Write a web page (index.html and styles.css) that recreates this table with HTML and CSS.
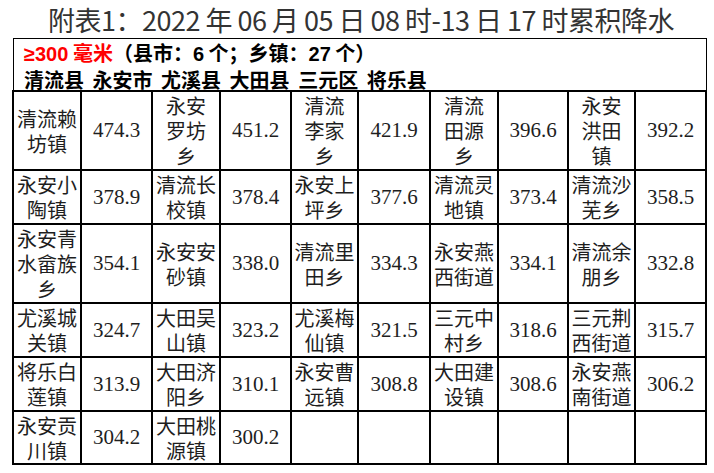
FILE: index.html
```html
<!DOCTYPE html>
<html lang="zh-CN">
<head>
<meta charset="utf-8">
<title>累积降水</title>
<link rel="stylesheet" href="styles.css">
</head>
<body>
<div class="page">
  <h1 class="title">附表1：2022 年 06 月 05 日 08 时-13 日 17 时累积降水</h1>
  <div class="summary">
    <div class="summary-line"><span class="red"><span class="lat">≥300</span> 毫米</span>（县市：<span class="lat">6</span> 个；乡镇：<span class="lat">27</span> 个）</div>
    <div class="summary-line counties">清流县 永安市 尤溪县 大田县 三元区 将乐县</div>
  </div>
  <div class="grid">
    <div class="cell name">清流赖<br>坊镇</div><div class="cell val">474.3</div>
    <div class="cell name">永安<br>罗坊<br>乡</div><div class="cell val">451.2</div>
    <div class="cell name">清流<br>李家<br>乡</div><div class="cell val">421.9</div>
    <div class="cell name">清流<br>田源<br>乡</div><div class="cell val">396.6</div>
    <div class="cell name">永安<br>洪田<br>镇</div><div class="cell val">392.2</div>

    <div class="cell name">永安小<br>陶镇</div><div class="cell val">378.9</div>
    <div class="cell name">清流长<br>校镇</div><div class="cell val">378.4</div>
    <div class="cell name">永安上<br>坪乡</div><div class="cell val">377.6</div>
    <div class="cell name">清流灵<br>地镇</div><div class="cell val">373.4</div>
    <div class="cell name">清流沙<br>芜乡</div><div class="cell val">358.5</div>

    <div class="cell name">永安青<br>水畲族<br>乡</div><div class="cell val">354.1</div>
    <div class="cell name">永安安<br>砂镇</div><div class="cell val">338.0</div>
    <div class="cell name">清流里<br>田乡</div><div class="cell val">334.3</div>
    <div class="cell name">永安燕<br>西街道</div><div class="cell val">334.1</div>
    <div class="cell name">清流余<br>朋乡</div><div class="cell val">332.8</div>

    <div class="cell name">尤溪城<br>关镇</div><div class="cell val">324.7</div>
    <div class="cell name">大田吴<br>山镇</div><div class="cell val">323.2</div>
    <div class="cell name">尤溪梅<br>仙镇</div><div class="cell val">321.5</div>
    <div class="cell name">三元中<br>村乡</div><div class="cell val">318.6</div>
    <div class="cell name">三元荆<br>西街道</div><div class="cell val">315.7</div>

    <div class="cell name">将乐白<br>莲镇</div><div class="cell val">313.9</div>
    <div class="cell name">大田济<br>阳乡</div><div class="cell val">310.1</div>
    <div class="cell name">永安曹<br>远镇</div><div class="cell val">308.8</div>
    <div class="cell name">大田建<br>设镇</div><div class="cell val">308.6</div>
    <div class="cell name">永安燕<br>南街道</div><div class="cell val">306.2</div>

    <div class="cell name">永安贡<br>川镇</div><div class="cell val">304.2</div>
    <div class="cell name">大田桃<br>源镇</div><div class="cell val">300.2</div>
    <div class="cell"></div><div class="cell"></div>
    <div class="cell"></div><div class="cell"></div>
    <div class="cell"></div><div class="cell"></div>
  </div>
</div>
</body>
</html>
```
FILE: styles.css
```css
html, body {
  margin: 0;
  padding: 0;
  background: #fff;
}

.page {
  width: 714px;
}

.title {
  margin: 0;
  height: 38px;
  padding-left: 8px;
  text-align: center;
  font-family: "Noto Sans CJK SC", sans-serif;
  font-weight: normal;
  font-size: 27px;
  letter-spacing: -0.5px;
  line-height: 40px;
  color: #333;
  white-space: nowrap;
}

.summary {
  margin-left: 13px;
  width: 694px;
  height: 52px;
  box-sizing: border-box;
  border: 1px solid #000;
  border-bottom: 0;
  padding: 1px 0 0 10px;
  font-family: "Noto Sans CJK SC", sans-serif;
  font-weight: bold;
  font-size: 20px;
  line-height: 25px;
  color: #000;
}

.summary-line {
  white-space: nowrap;
}

.counties {
  word-spacing: 4px;
}

.red {
  color: #f00;
}

.lat {
  font-family: "Liberation Sans", sans-serif;
}

.grid {
  margin-left: 12px;
  display: grid;
  grid-template-columns: 66px 69px 66px 69px 65px 70px 66px 68px 65px 69px;
  grid-template-rows: 77px 52px 77px 52px 52px 51px;
  gap: 2px;
  padding: 2px;
  background: #000;
  width: max-content;
}

.cell {
  background: #fff;
  display: flex;
  align-items: center;
  justify-content: center;
  text-align: center;
  color: #1e1e1e;
  overflow: hidden;
}

.name {
  font-family: "Noto Sans CJK SC", sans-serif;
  font-size: 20px;
  line-height: 25px;
}

.val {
  font-family: "Liberation Serif", serif;
  font-size: 21px;
}
```
